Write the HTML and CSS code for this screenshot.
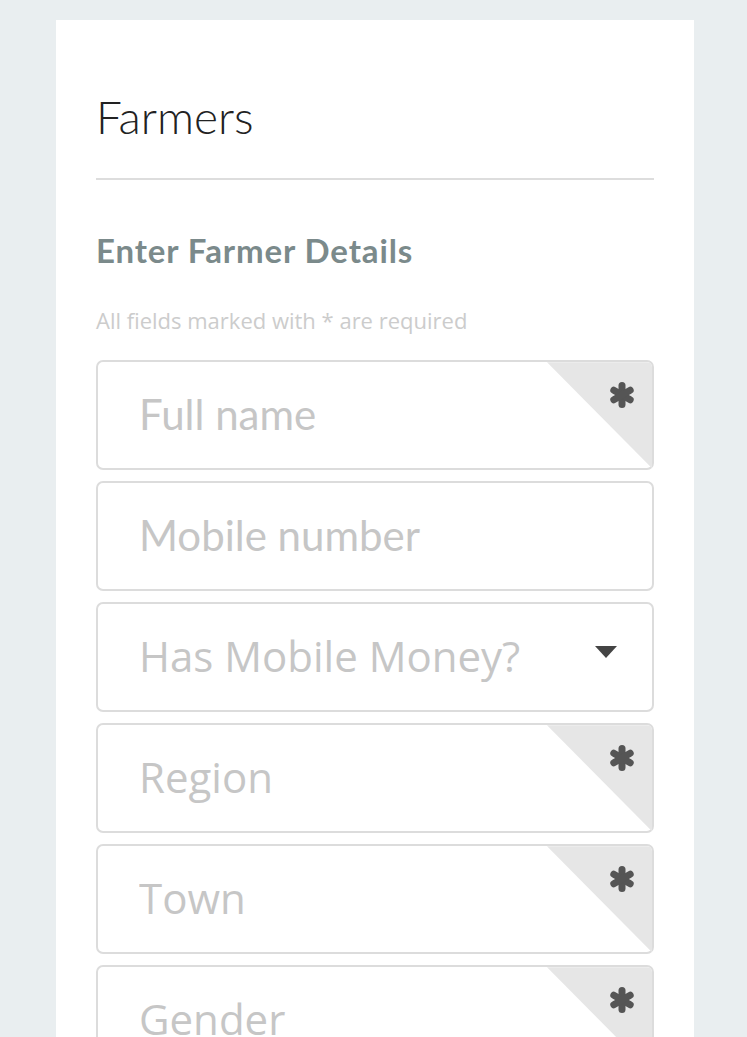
FILE: index.html
```html
<!DOCTYPE html>
<html lang="en">
<head>
<meta charset="utf-8">
<title>Farmers</title>
<link rel="stylesheet" href="styles.css">
</head>
<body>
<main class="card">
  <h1 class="title">Farmers</h1>
  <h2 class="subtitle">Enter Farmer Details</h2>
  <p class="hint">All fields marked with * are required</p>
  <form class="form">
    <div class="field">
      <input class="control" type="text" placeholder="Full name">
      <span class="corner"><svg class="star" viewBox="0 0 26 26"><g stroke="#555" stroke-width="7" stroke-linecap="round"><line x1="13" y1="3.5" x2="13" y2="22.5"/><line x1="4.8" y1="8.25" x2="21.2" y2="17.75"/><line x1="4.8" y1="17.75" x2="21.2" y2="8.25"/></g></svg></span>
    </div>
    <div class="field">
      <input class="control" type="tel" placeholder="Mobile number">
    </div>
    <div class="field">
      <select class="control select"><option>Has Mobile Money?</option></select>
      <span class="caret"></span>
    </div>
    <div class="field">
      <select class="control select"><option>Region</option></select>
      <span class="corner"><svg class="star" viewBox="0 0 26 26"><g stroke="#555" stroke-width="7" stroke-linecap="round"><line x1="13" y1="3.5" x2="13" y2="22.5"/><line x1="4.8" y1="8.25" x2="21.2" y2="17.75"/><line x1="4.8" y1="17.75" x2="21.2" y2="8.25"/></g></svg></span>
    </div>
    <div class="field">
      <select class="control select"><option>Town</option></select>
      <span class="corner"><svg class="star" viewBox="0 0 26 26"><g stroke="#555" stroke-width="7" stroke-linecap="round"><line x1="13" y1="3.5" x2="13" y2="22.5"/><line x1="4.8" y1="8.25" x2="21.2" y2="17.75"/><line x1="4.8" y1="17.75" x2="21.2" y2="8.25"/></g></svg></span>
    </div>
    <div class="field">
      <select class="control select"><option>Gender</option></select>
      <span class="corner"><svg class="star" viewBox="0 0 26 26"><g stroke="#555" stroke-width="7" stroke-linecap="round"><line x1="13" y1="3.5" x2="13" y2="22.5"/><line x1="4.8" y1="8.25" x2="21.2" y2="17.75"/><line x1="4.8" y1="17.75" x2="21.2" y2="8.25"/></g></svg></span>
    </div>
  </form>
</main>
</body>
</html>
```

FILE: styles.css
```css
html, body {
  margin: 0;
  padding: 0;
  background: #e9eef0;
}

body {
  padding: 20px 53px 0 56px;
  font-family: Lato, "Open Sans", sans-serif;
}

.card {
  background: #ffffff;
  padding: 69px 40px 40px;
}

.title {
  margin: 0;
  font-family: Lato, sans-serif;
  font-weight: 300;
  font-size: 46px;
  line-height: 1.2;
  color: #222;
  padding-bottom: 34px;
  border-bottom: 2px solid #dddddd;
}

.subtitle {
  margin: 51px 0 0;
  font-family: Lato, sans-serif;
  font-weight: 700;
  font-size: 33px;
  letter-spacing: 0.9px;
  line-height: 38px;
  color: #7b8a8b;
}

.hint {
  margin: 38px 0 0;
  font-family: "Open Sans", sans-serif;
  font-size: 22px;
  line-height: 27px;
  color: #cccccc;
}

.form {
  margin-top: 26px;
  display: flex;
  flex-direction: column;
  gap: 11px;
}

.field {
  position: relative;
  height: 110px;
}

.control {
  box-sizing: border-box;
  width: 100%;
  height: 110px;
  margin: 0;
  border: 2px solid #dcdcdc;
  border-radius: 7px;
  background: #fff;
  padding: 0 0 3px 41px;
  font-family: Lato, sans-serif;
  font-size: 42px;
  color: #c6c6c6;
  outline: none;
}

.control::placeholder {
  color: #c6c6c6;
  opacity: 1;
}

.select {
  -webkit-appearance: none;
  appearance: none;
  font-family: "Open Sans", sans-serif;
  padding-left: 41px;
}

.corner {
  position: absolute;
  top: 2px;
  right: 2px;
  width: 105px;
  height: 106px;
  background: #e6e6e6;
  clip-path: polygon(0 0, 100% 0, 100% 100%);
  border-top-right-radius: 5px;
}

.star {
  position: absolute;
  top: 20px;
  right: 17px;
  width: 26px;
  height: 26px;
}

.caret {
  position: absolute;
  top: 44px;
  right: 37px;
  width: 0;
  height: 0;
  border-left: 11px solid transparent;
  border-right: 11px solid transparent;
  border-top: 12px solid #444;
}
```
